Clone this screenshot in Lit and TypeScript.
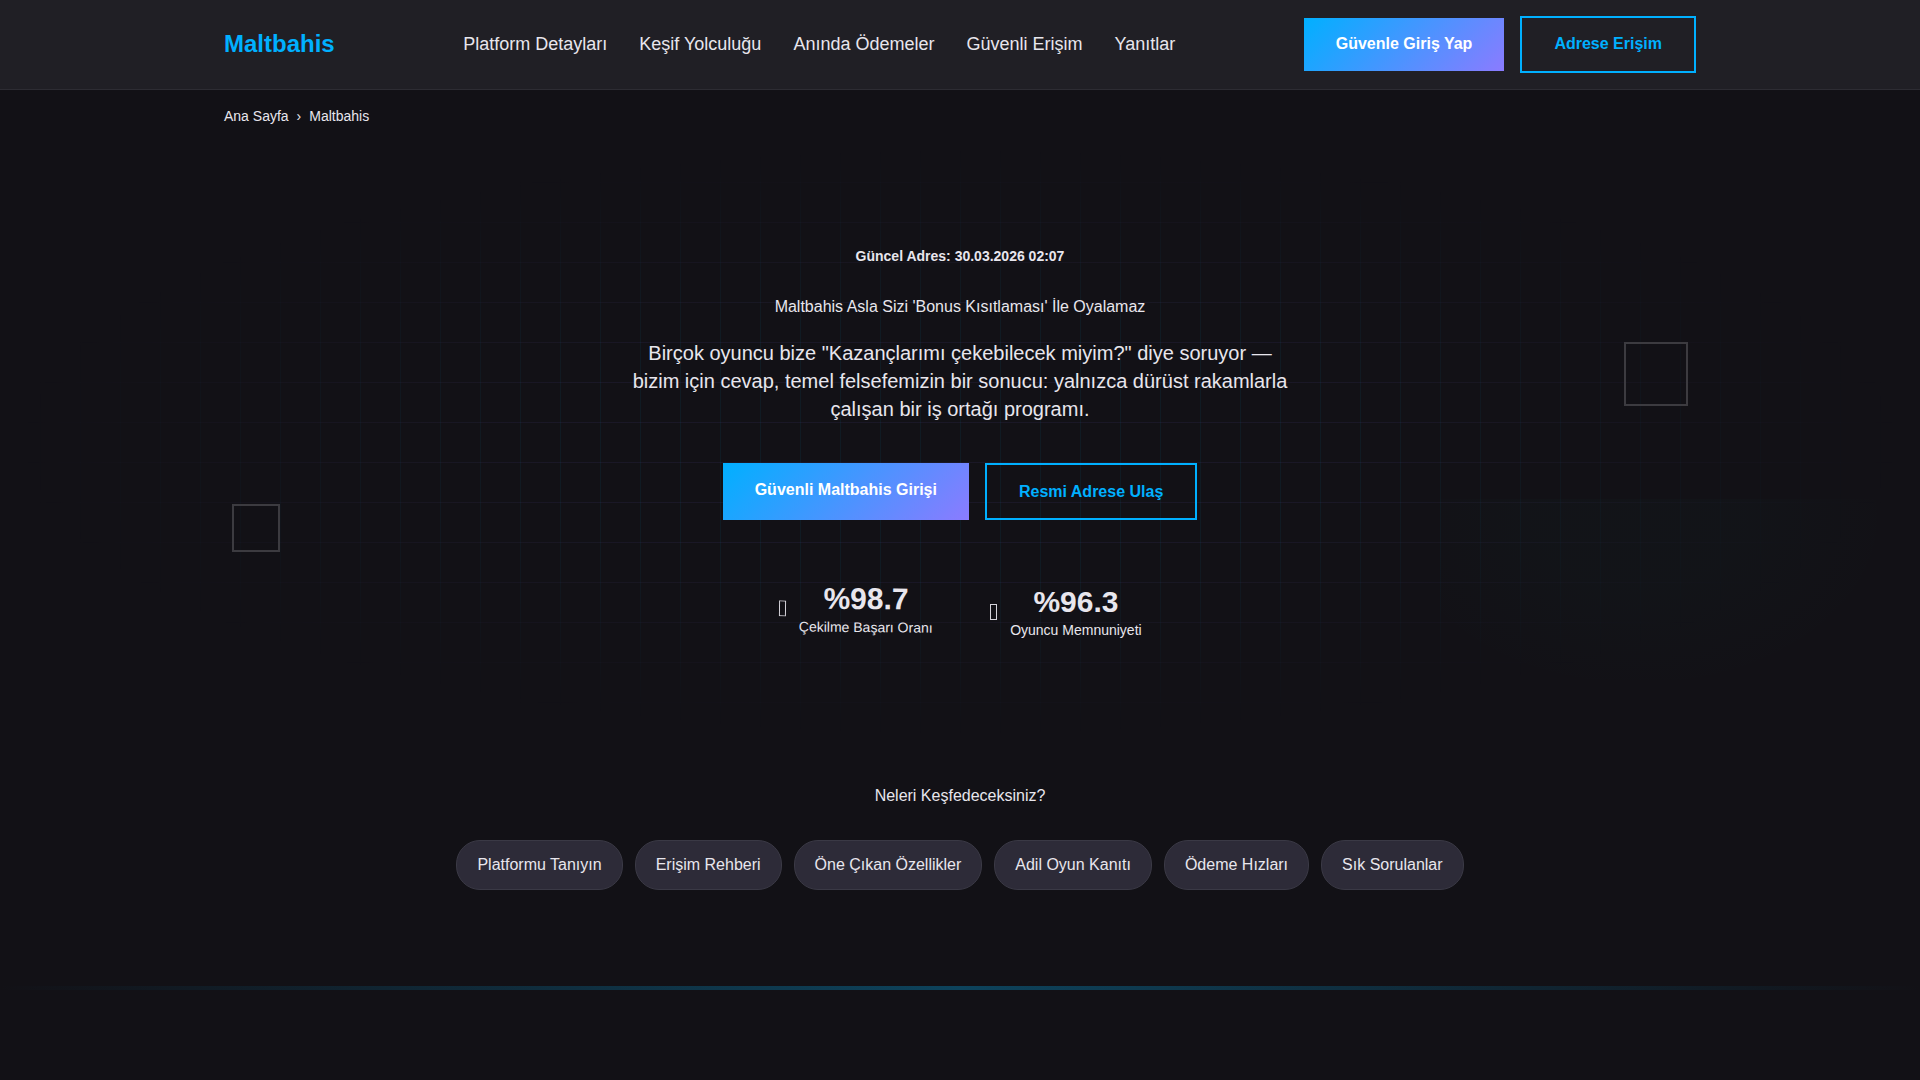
import { LitElement, html, css } from "lit";
import { customElement } from "lit/decorators.js";

const NAV = ["Platform Detayları", "Keşif Yolculuğu", "Anında Ödemeler", "Güvenli Erişim", "Yanıtlar"];
const TOPICS = ["Platformu Tanıyın", "Erişim Rehberi", "Öne Çıkan Özellikler", "Adil Oyun Kanıtı", "Ödeme Hızları", "Sık Sorulanlar"];
const STATS = [
  { value: "%98.7", label: "Çekilme Başarı Oranı", cls: "stat tilted" },
  { value: "%96.3", label: "Oyuncu Memnuniyeti", cls: "stat" },
];

@customElement("app-root")
export class AppRoot extends LitElement {
  static styles = css`
    :host {
      display: block;
      min-height: 100vh;
      background: #121116;
      color: #e8e6ed;
      font-family: "Liberation Sans", Arial, sans-serif;
      font-size: 16px;
      line-height: 26px;
    }
    * { box-sizing: border-box; }
    a { color: inherit; text-decoration: none; }
    h1, h2, p, ul, ol { margin: 0; padding: 0; font-size: inherit; font-weight: 400; }
    ul, ol { list-style: none; }
    .container { max-width: 1536px; margin: 0 auto; padding: 0 32px; }
    .header { background: #201f25; border-bottom: 1px solid #2d2c33; line-height: 25px; }
    .bar { display: flex; align-items: center; justify-content: space-between; padding-top: 16px; padding-bottom: 16px; }
    .logo { padding-bottom: 2px; color: #00b0ff; font-size: 24px; font-weight: 700; }
    .menu { display: flex; gap: 32px; font-size: 18px; }
    .actions { display: flex; align-items: center; gap: 16px; }
    .btn { display: block; padding: 14px 32px; font-weight: 700; line-height: 25px; }
    .actions .btn { padding: 13px 32px 15px; }
    .primary { color: #fff; background: linear-gradient(135deg, #00b0ff, #8b7bff); }
    .outline { color: #00b0ff; border: 2px solid #00b0ff; }
    .crumbs ol { display: flex; gap: 8px; padding: 16px 0; font-size: 14px; line-height: 20px; }
    .hero { position: relative; overflow: hidden; padding: 96px 32px 102px; }
    .hero::before {
      content: "";
      position: absolute;
      inset: 0;
      background-image:
        linear-gradient(rgba(139, 123, 255, 0.07) 1px, transparent 1px),
        linear-gradient(90deg, rgba(0, 190, 255, 0.06) 1px, transparent 1px);
      background-size: 40px 40px;
      mask-image: radial-gradient(ellipse at center, #000 30%, transparent 70%);
    }
    .hero::after {
      content: "";
      position: absolute;
      right: 40px;
      bottom: 62px;
      width: 440px;
      height: 181px;
      background: radial-gradient(ellipse 260px 180px at 45% 10%, rgba(0, 190, 160, 0.014) 40%, transparent);
    }
    .frame { position: absolute; border: 2px solid #3c3b40; }
    .frame-right { top: 200px; right: 232px; width: 64px; height: 64px; }
    .frame-left { top: 362px; left: 232px; width: 48px; height: 48px; }
    .content { position: relative; display: flex; flex-direction: column; align-items: center; text-align: center; }
    .updated { font-size: 14px; font-weight: 700; line-height: 36px; }
    .title { margin-top: 20px; line-height: 25px; }
    .lead { max-width: 672px; margin-top: 20px; font-size: 20px; line-height: 28px; }
    .cta { display: flex; gap: 16px; margin-top: 40px; }
    .stats { display: flex; gap: 56px; margin-top: 64px; }
    .stat { display: flex; align-items: center; gap: 12px; }
    .tilted { transform: translateY(-3px) rotate(0.5deg); }
    .icon { display: block; width: 9px; height: 16px; }
    .value { font-size: 30px; font-weight: 700; line-height: 36px; }
    .label { font-size: 14px; line-height: 20px; }
    .topics { padding: 41px 32px 96px; text-align: center; }
    .chips { display: flex; flex-wrap: wrap; justify-content: center; gap: 12px; margin-top: 31px; }
    .chip { display: block; padding: 11px 20px; border: 1px solid #3a3945; border-radius: 24px; background: #2d2b38; }
    .divider { height: 4px; background: linear-gradient(90deg, transparent, #0d435c, transparent); }
  `;

  render() {
    return html`
      <header class="header">
        <div class="container bar">
          <a class="logo" href="#">Maltbahis</a>
          <nav><ul class="menu">${NAV.map((t) => html`<li><a href="#">${t}</a></li>`)}</ul></nav>
          <div class="actions">
            <a class="btn primary" href="#">Güvenle Giriş Yap</a>
            <a class="btn outline" href="#">Adrese Erişim</a>
          </div>
        </div>
      </header>
      <nav class="container crumbs">
        <ol><li><a href="#">Ana Sayfa</a></li><li>›</li><li>Maltbahis</li></ol>
      </nav>
      <main>
        <section class="hero">
          <div class="frame frame-right"></div>
          <div class="frame frame-left"></div>
          <div class="content">
            <p class="updated">Güncel Adres: 30.03.2026 02:07</p>
            <h1 class="title">Maltbahis Asla Sizi 'Bonus Kısıtlaması' İle Oyalamaz</h1>
            <p class="lead">Birçok oyuncu bize "Kazançlarımı çekebilecek miyim?" diye soruyor — bizim için cevap, temel felsefemizin bir sonucu: yalnızca dürüst rakamlarla çalışan bir iş ortağı programı.</p>
            <div class="cta">
              <a class="btn primary" href="#">Güvenli Maltbahis Girişi</a>
              <a class="btn outline" href="#">Resmi Adrese Ulaş</a>
            </div>
            <div class="stats">
              ${STATS.map((s) => html`<div class=${s.cls}>
                <svg class="icon" viewBox="0 0 9 16" aria-hidden="true">
                  <rect x="1.5" y="0.5" width="6" height="15" fill="none" stroke="#d4d2d9" />
                </svg>
                <div><div class="value">${s.value}</div><div class="label">${s.label}</div></div>
              </div>`)}
            </div>
          </div>
        </section>
        <section class="topics">
          <h2>Neleri Keşfedeceksiniz?</h2>
          <ul class="chips">${TOPICS.map((t) => html`<li><a class="chip" href="#">${t}</a></li>`)}</ul>
        </section>
        <div class="divider"></div>
      </main>
    `;
  }
}
